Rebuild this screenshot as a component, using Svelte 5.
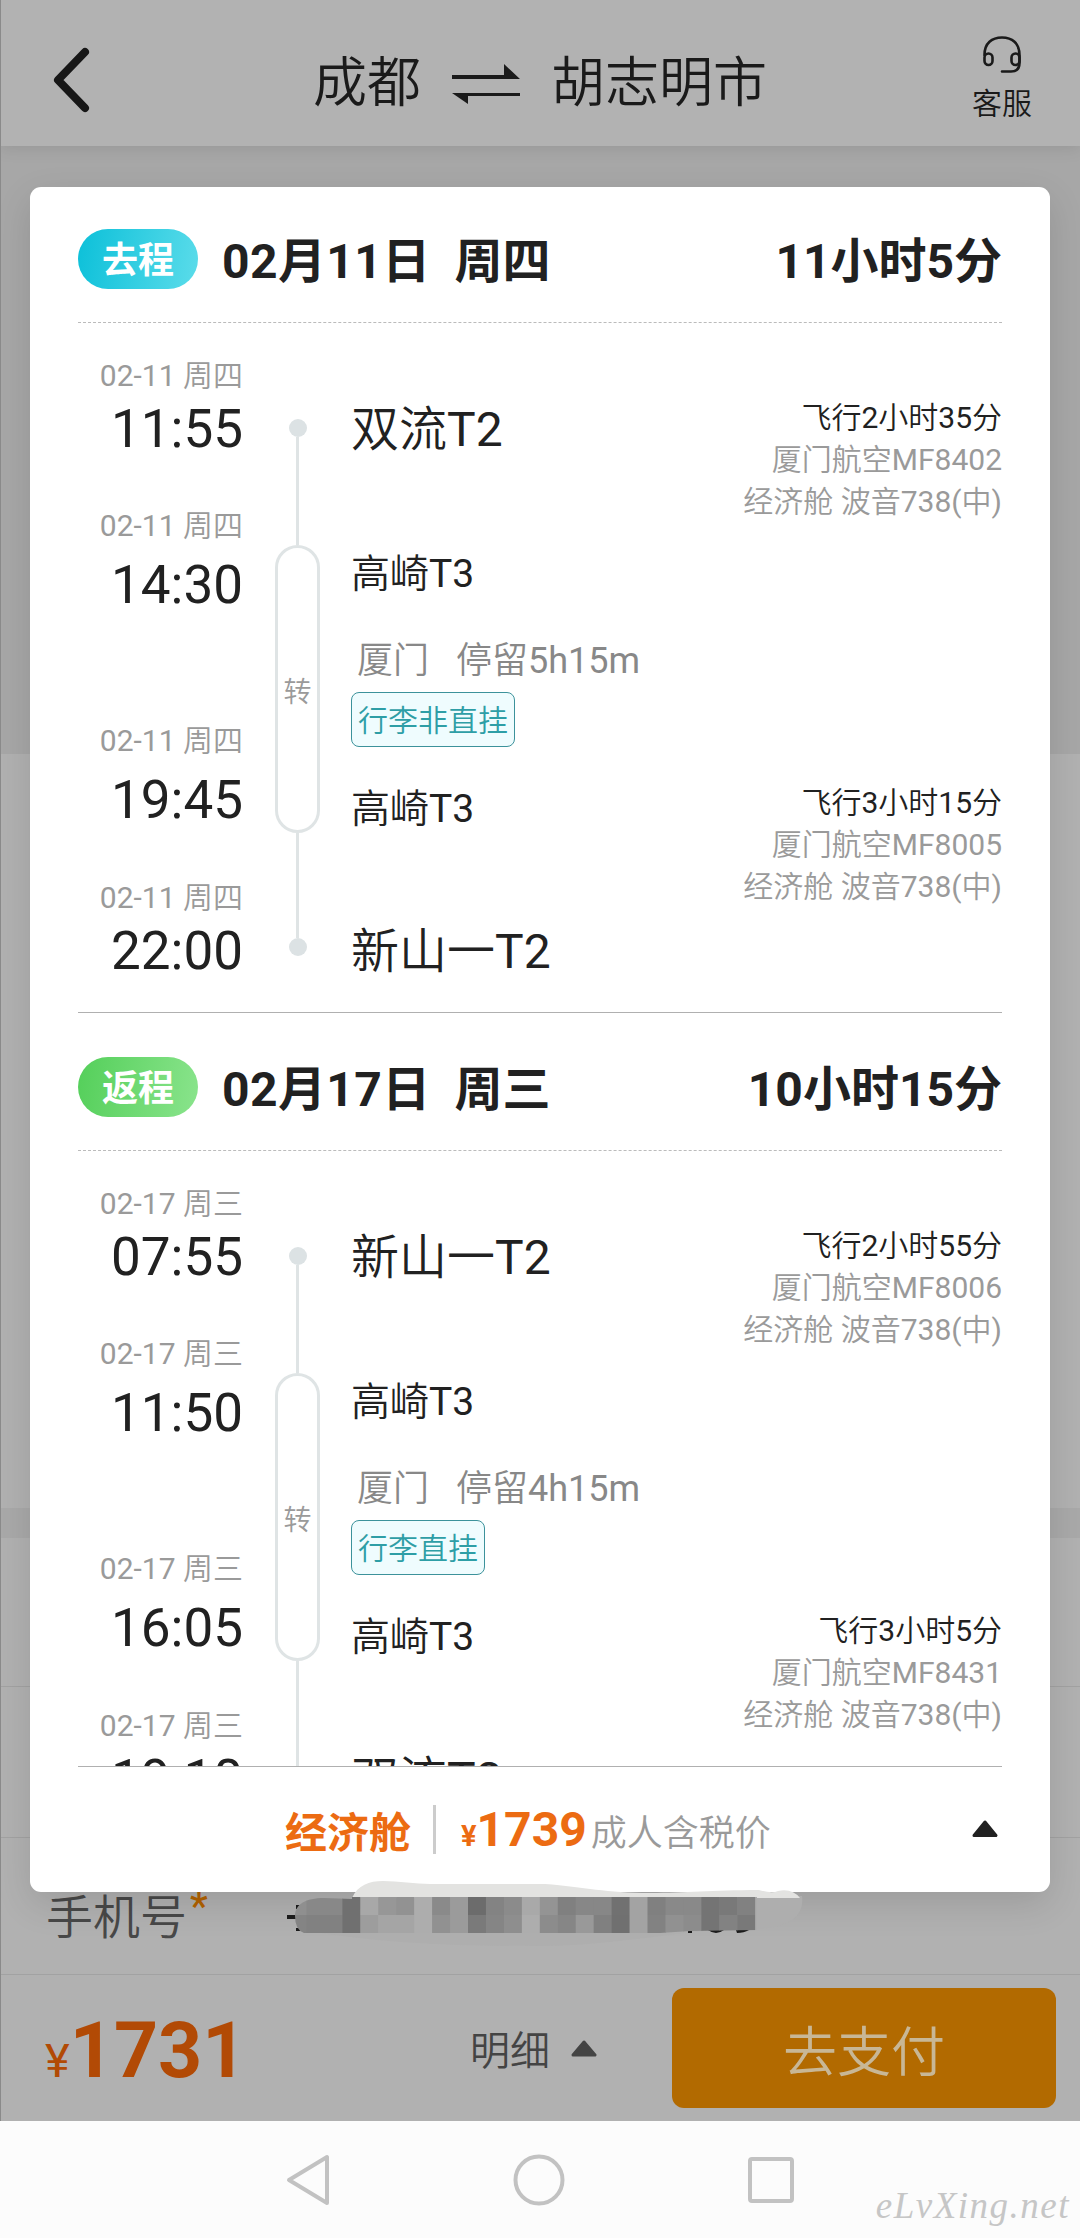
<script lang="ts">
  type Stop = { date: string; time: string; station: string };
  type Flight = { duration: string; number: string; cabin: string };
  type Leg = {
    kind: "outbound" | "inbound";
    label: string;
    day: string;
    weekday: string;
    total: string;
    stops: Stop[];
    city: string;
    stay: string;
    luggage: string;
    flights: Flight[];
  };

  const cabin = "经济舱 波音738(中)";

  const legs: Leg[] = [
    {
      kind: "outbound",
      label: "去程",
      day: "02月11日",
      weekday: "周四",
      total: "11小时5分",
      stops: [
        { date: "02-11 周四", time: "11:55", station: "双流T2" },
        { date: "02-11 周四", time: "14:30", station: "高崎T3" },
        { date: "02-11 周四", time: "19:45", station: "高崎T3" },
        { date: "02-11 周四", time: "22:00", station: "新山一T2" },
      ],
      city: "厦门",
      stay: "停留5h15m",
      luggage: "行李非直挂",
      flights: [
        { duration: "飞行2小时35分", number: "厦门航空MF8402", cabin },
        { duration: "飞行3小时15分", number: "厦门航空MF8005", cabin },
      ],
    },
    {
      kind: "inbound",
      label: "返程",
      day: "02月17日",
      weekday: "周三",
      total: "10小时15分",
      stops: [
        { date: "02-17 周三", time: "07:55", station: "新山一T2" },
        { date: "02-17 周三", time: "11:50", station: "高崎T3" },
        { date: "02-17 周三", time: "16:05", station: "高崎T3" },
        { date: "02-17 周三", time: "19:10", station: "双流T2" },
      ],
      city: "厦门",
      stay: "停留4h15m",
      luggage: "行李直挂",
      flights: [
        { duration: "飞行2小时55分", number: "厦门航空MF8006", cabin },
        { duration: "飞行3小时5分", number: "厦门航空MF8431", cabin },
      ],
    },
  ];

  // grey levels of the mosaic over the phone number, top and bottom row
  const mosaic = [
    [143, 132], [136, 129], [136, 129], [112, 112], [168, 157], [151, 165],
    [146, 165], [173, 173], [138, 145], [155, 155], [108, 122], [131, 133],
    [139, 142], [169, 173], [148, 140], [128, 134], [135, 153], [135, 128],
    [113, 112], [163, 163], [128, 130], [137, 145], [137, 140], [116, 116],
    [121, 130], [129, 121], [172, 172], [175, 175],
  ];
</script>

<div class="screen">
  <header class="topbar">
    <svg class="back" width="40" height="66" viewBox="0 0 40 66">
      <path d="M34 5 L7 33 L34 61" />
    </svg>
    <h1>
      <span>成都</span>
      <svg width="70" height="44" viewBox="0 0 70 44">
        <path d="M1 17H69L53 2V13H1Z M69 31H1L17 42V34H69Z" />
      </svg>
      <span>胡志明市</span>
    </h1>
    <div class="service">
      <svg width="40" height="40" viewBox="0 0 40 40">
        <path d="M2.500 20C2.500 8 10 2.500 20 2.500S37.500 8 37.500 20V28C37.500 34 34 36.500 29 36.500H20" />
        <rect x="2.500" y="18.500" width="8" height="11.500" rx="4" />
        <rect x="29.500" y="18.500" width="8" height="11.500" rx="4" />
      </svg>
      <span>客服</span>
    </div>
  </header>

  <main class="form">
    <div class="summary"></div>
    <div class="block"></div>
    <div class="gap"></div>
    <div class="row first"></div>
    <div class="row second"></div>
    <div class="row phone"><span>手机号</span><i>*</i></div>
  </main>

  <footer class="paybar">
    <div class="price"><small>¥</small>1731</div>
    <div class="detail">
      明细
      <svg width="26" height="17" viewBox="0 0 26 17"><path d="M13 2L24 15H2Z" /></svg>
    </div>
    <button type="button">去支付</button>
  </footer>

  <nav>
    <svg width="46" height="54" viewBox="0 0 46 54"><path d="M42 4V50L4 27Z" /></svg>
    <svg width="54" height="54" viewBox="0 0 54 54"><circle cx="27" cy="27" r="23.500" /></svg>
    <svg width="48" height="48" viewBox="0 0 48 48"><rect x="3" y="3" width="42" height="42" rx="2" /></svg>
  </nav>

  <section class="card">
    <div class="scroll">
      {#each legs as leg}
        <article>
          <div class="leg-head">
            <span class="pill {leg.kind}">{leg.label}</span>
            <strong class="day">{leg.day}</strong>
            <strong class="weekday">{leg.weekday}</strong>
            <strong class="total">{leg.total}</strong>
          </div>
          <div class="leg-body">
            <div class="times">
              {#each leg.stops as stop}
                <div class="stop">
                  <span class="date">{stop.date}</span>
                  <span class="time">{stop.time}</span>
                </div>
              {/each}
            </div>
            <div class="rail">
              <i class="dot"></i>
              <i class="line"></i>
              <span class="transfer">转</span>
              <i class="line short"></i>
              <i class="dot"></i>
            </div>
            <div class="stations">
              <span class="station">{leg.stops[0].station}</span>
              <span class="station small">{leg.stops[1].station}</span>
              <span class="stay"><span>{leg.city}</span><span>{leg.stay}</span></span>
              <span class="tag">{leg.luggage}</span>
              <span class="station small next">{leg.stops[2].station}</span>
              <span class="station last">{leg.stops[3].station}</span>
            </div>
            <div class="flights">
              {#each leg.flights as flight}
                <div class="flight">
                  <b>{flight.duration}</b>
                  <span>{flight.number}</span>
                  <span>{flight.cabin}</span>
                </div>
              {/each}
            </div>
          </div>
        </article>
      {/each}
    </div>
    <div class="fare">
      <strong class="cabin">经济舱</strong>
      <i class="bar"></i>
      <strong class="amount"><small>¥</small>1739</strong>
      <span class="note">成人含税价</span>
      <svg width="28" height="20" viewBox="0 0 28 20"><path d="M14 3L25 16.500H3Z" /></svg>
    </div>
  </section>

  <svg class="smudge" width="530" height="80" viewBox="280 1870 530 80">
    <defs>
      <clipPath id="brush">
        <path d="M295 1916C295 1904 306 1898 324 1898L352 1899V1896H757V1930L690 1931L660 1933H304Q295 1930 295 1916Z" />
      </clipPath>
    </defs>
    <path class="under" d="M304 1930H757V1896H802Q806 1925 760 1929C700 1926 620 1946 540 1946S380 1944 304 1930Z" />
    <path class="ink" d="M287 1915H296V1919H287ZM296 1905H300V1909H296ZM296 1928H300V1931H296ZM688 1930H692V1933H688ZM708 1930H724Q716 1936 708 1930ZM736 1930H749Q744 1933 737 1933Z" />
    <path class="paint" d="M352 1898C358 1885 369 1881 383 1881C398 1881 416 1884 430 1884H545C585 1887 606 1893 650 1893C687 1893 710 1890 759 1890Q772 1894 778 1891Q792 1888 800 1898Z" />
    <g clip-path="url(#brush)">
      {#each mosaic as [top, bottom], i}
        <rect x={288.5 + i * 17.95} y="1897" width="18.500" height="18" fill="rgb({top},{top},{top})" />
        <rect x={288.5 + i * 17.95} y="1915" width="18.500" height="18" fill="rgb({bottom},{bottom},{bottom})" />
      {/each}
    </g>
  </svg>

  <span class="watermark">eLvXing.net</span>
</div>

<style>
  :global(body) {
    margin: 0;
  }

  .screen {
    position: relative;
    display: flex;
    flex-direction: column;
    width: 1080px;
    height: 2238px;
    overflow: hidden;
    background: #b1b1b1;
    color: #212121;
    font-family: Roboto, "Noto Sans CJK SC DemiLight", "Noto Sans CJK SC", sans-serif;
  }

  .screen::after {
    content: "";
    position: absolute;
    inset: 0 auto 117px 0;
    width: 1px;
    background: #8a8a8a;
  }

  svg {
    display: block;
    flex: none;
  }

  strong,
  .pill {
    font-family: Roboto, "Noto Sans CJK SC", sans-serif;
  }

  .topbar {
    position: relative;
    display: flex;
    align-items: center;
    justify-content: space-between;
    box-sizing: border-box;
    height: 146px;
    padding: 0 44px 0 51px;
    background: #b2b2b2;
    box-shadow: 0 2px 16px rgba(0, 0, 0, 0.1);
    color: #1a1a1a;
  }

  .back {
    margin-top: 13px;
    fill: none;
    stroke: #171717;
    stroke-width: 8;
    stroke-linecap: round;
    stroke-linejoin: round;
  }

  h1 {
    display: flex;
    align-items: center;
    gap: 30px;
    margin: 22px 0 0 17px;
    font-size: 54px;
    font-weight: 400;
    line-height: 70px;
  }

  h1 svg {
    fill: #1a1a1a;
  }

  .service {
    display: flex;
    flex-direction: column;
    align-items: center;
    gap: 9px;
    margin-top: 12px;
    padding-right: 4px;
    font-size: 30px;
    line-height: 40px;
  }

  .service svg {
    fill: none;
    stroke: #1a1a1a;
    stroke-width: 2.6;
    stroke-linecap: round;
  }

  .form {
    display: flex;
    flex-direction: column;
  }

  .summary {
    height: 608px;
    background: #a7a7a7;
  }

  .block {
    height: 754px;
    background: #b1b1b1;
  }

  .gap {
    height: 30px;
    background: #a9a9a9;
  }

  .row {
    box-sizing: border-box;
    border-bottom: 1px solid #a2a2a2;
  }

  .row.first {
    height: 149px;
  }

  .row.second {
    height: 151px;
  }

  .row.phone {
    display: flex;
    align-items: center;
    height: 137px;
    padding: 14px 0 0 46px;
    color: #484848;
    font-size: 47px;
  }

  .row i {
    margin: -14px 0 0 3px;
    color: #b26200;
    font-size: 40px;
    font-style: normal;
    font-weight: 500;
  }

  .paybar {
    display: flex;
    align-items: center;
    box-sizing: border-box;
    height: 146px;
    padding: 0 24px 0 45px;
  }

  .price {
    display: flex;
    align-items: baseline;
    width: 425px;
    margin-top: 6px;
    color: #b24a05;
    font-size: 77px;
    font-weight: 700;
  }

  .price small {
    font-size: 47px;
    font-weight: 400;
  }

  .detail {
    display: flex;
    align-items: center;
    gap: 21px;
    width: 202px;
    color: #444;
    font-size: 40px;
  }

  .detail svg,
  .fare svg {
    fill: currentColor;
    stroke: currentColor;
    stroke-width: 3;
    stroke-linejoin: round;
  }

  button {
    flex: 1;
    height: 120px;
    padding: 0;
    border: none;
    border-radius: 12px;
    background: #b26a00;
    color: #c8b796;
    font-family: inherit;
    font-size: 54px;
  }

  nav {
    display: flex;
    align-items: center;
    gap: 181px;
    height: 117px;
    padding-left: 285px;
    background: #fcfcfc;
  }

  nav svg {
    fill: none;
    stroke: #c2c2c2;
    stroke-width: 4;
    stroke-linejoin: round;
  }

  .card {
    position: absolute;
    top: 187px;
    left: 30px;
    display: flex;
    flex-direction: column;
    box-sizing: border-box;
    width: 1020px;
    height: 1705px;
    padding: 0 48px;
    border-radius: 11px;
    background: #fff;
    box-shadow: 0 12px 36px rgba(0, 0, 0, 0.12);
  }

  .scroll {
    height: 1579px;
    overflow: hidden;
  }

  article {
    height: 828px;
  }

  .leg-head {
    display: flex;
    align-items: center;
    box-sizing: border-box;
    height: 136px;
    padding-top: 9px;
    border-bottom: 1px dashed #bbb;
    font-size: 48px;
    line-height: 60px;
  }

  .leg-head strong {
    padding-top: 6px;
  }

  .pill {
    box-sizing: border-box;
    width: 120px;
    height: 60px;
    margin-right: 24px;
    padding-top: 2px;
    border-radius: 30px;
    color: #fff;
    font-size: 36px;
    font-weight: 700;
    text-align: center;
  }

  .pill.outbound {
    background: linear-gradient(100deg, #0cc0d9, #5bdcea);
  }

  .pill.inbound {
    background: linear-gradient(100deg, #54cf5a, #8ae48c);
  }

  .day {
    letter-spacing: 0.4px;
  }

  .weekday {
    margin-left: 24px;
  }

  .total {
    margin-left: auto;
  }

  .leg-body {
    display: flex;
    box-sizing: border-box;
    height: 690px;
    border-bottom: 1px solid #b0b0b0;
  }

  .times {
    width: 165px;
    text-align: right;
  }

  .stop {
    display: flex;
    flex-direction: column;
    gap: 5px;
    padding-top: 35px;
  }

  .stop:nth-child(2) {
    gap: 11px;
    padding-top: 49px;
  }

  .stop:nth-child(3) {
    gap: 11px;
    padding-top: 108px;
  }

  .stop:nth-child(4) {
    padding-top: 50px;
  }

  .date {
    color: #9a9a9a;
    font-size: 30px;
    line-height: 36px;
  }

  .time {
    font-size: 53px;
    line-height: 60px;
  }

  .rail {
    display: flex;
    flex-direction: column;
    align-items: center;
    width: 45px;
    padding-top: 96px;
    margin: 0 33px 0 32px;
  }

  .dot {
    width: 18px;
    height: 18px;
    border-radius: 50%;
    background: #dce2e4;
  }

  .line {
    width: 3px;
    height: 108px;
    background: #dfe4e5;
  }

  .line.short {
    height: 105px;
  }

  .transfer {
    box-sizing: border-box;
    width: 45px;
    height: 288px;
    border: 3px solid #dfe4e5;
    border-radius: 23px;
    color: #9a9a9a;
    font-size: 28px;
    line-height: 289px;
    text-align: center;
  }

  .stations {
    display: flex;
    flex: 1;
    flex-direction: column;
    align-items: flex-start;
    padding-top: 77px;
    margin-left: -2px;
  }

  .station {
    font-size: 48px;
    line-height: 60px;
  }

  .station.small {
    margin-top: 89px;
    font-size: 39px;
    line-height: 50px;
  }

  .station.small.next {
    margin-top: 37px;
  }

  .station.last {
    margin-top: 88px;
  }

  .stay {
    display: flex;
    gap: 27px;
    margin-top: 40px;
    padding-left: 6px;
    color: #888;
    font-size: 36px;
    line-height: 44px;
  }

  .tag {
    box-sizing: border-box;
    height: 55px;
    margin-top: 9px;
    padding: 0 6px;
    border: 1px solid #3c929b;
    border-radius: 8px;
    background: #effcfe;
    color: #2e9ea6;
    font-size: 30px;
    line-height: 55px;
  }

  .flights {
    padding-top: 74px;
    text-align: right;
  }

  .flight {
    display: flex;
    flex-direction: column;
    height: 126px;
    margin-bottom: 259px;
    color: #9a9a9a;
    font-size: 30px;
    line-height: 42px;
  }

  .flight b {
    color: #212121;
    font-weight: inherit;
  }

  .fare {
    display: flex;
    align-items: center;
    box-sizing: border-box;
    height: 126px;
    padding: 0 3px 0 207px;
    border-top: 1px solid #b0b0b0;
    color: #ec6b12;
  }

  .cabin {
    font-size: 42px;
  }

  .bar {
    width: 3px;
    height: 49px;
    margin: 0 25px 0 22px;
    background: #ccc;
  }

  .amount {
    font-size: 48px;
  }

  .amount small {
    font-size: 29px;
  }

  .note {
    margin-left: 4px;
    color: #9a9a9a;
    font-size: 36px;
  }

  .fare svg {
    margin: -2px 0 0 auto;
    color: #212121;
  }

  .smudge {
    position: absolute;
    top: 1870px;
    left: 280px;
  }

  .under {
    fill: #aeaeae;
  }

  .ink {
    fill: #1b1b1b;
  }

  .paint {
    fill: #e3e3e1;
  }

  .watermark {
    position: absolute;
    right: 10px;
    bottom: 11px;
    color: #c6c6c6;
    font: italic 37px "Liberation Serif", serif;
    letter-spacing: 1.5px;
  }
</style>
